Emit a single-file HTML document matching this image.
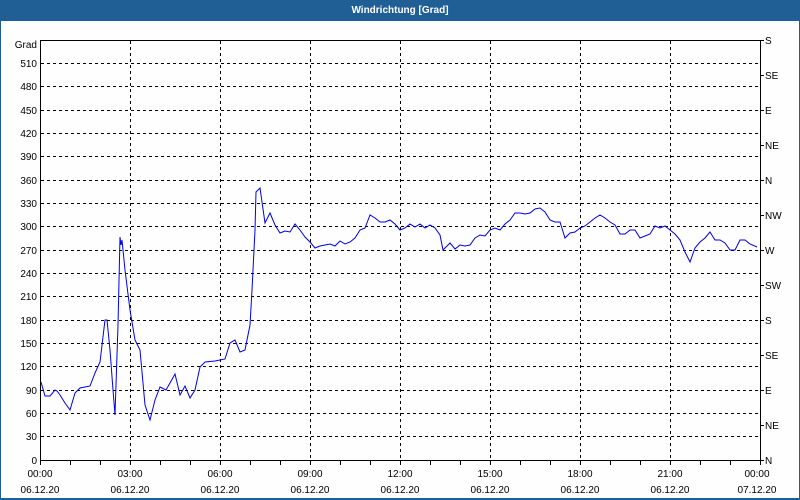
<!DOCTYPE html>
<html><head><meta charset="utf-8"><style>
html,body{margin:0;padding:0;background:#fff;width:800px;height:500px;overflow:hidden}
svg{display:block}
text{font-family:"Liberation Sans",sans-serif;font-size:10px;fill:#000}
</style></head><body>
<svg width="800" height="500" viewBox="0 0 800 500" xmlns="http://www.w3.org/2000/svg">
<rect x="0" y="0" width="800" height="500" fill="#1f5f96"/>
<rect x="1" y="21" width="798" height="477" fill="#fdfefd"/>
<text x="400" y="13" text-anchor="middle" style="fill:#fff;font-weight:bold;font-size:10px">Windrichtung [Grad]</text>
<g stroke="#000" stroke-width="1" stroke-dasharray="3,3" fill="none">
<path d="M41 63.5H760M41 86.5H760M41 110.5H760M41 133.5H760M41 156.5H760M41 180.5H760M41 203.5H760M41 226.5H760M41 250.5H760M41 273.5H760M41 296.5H760M41 320.5H760M41 343.5H760M41 366.5H760M41 390.5H760M41 413.5H760M41 436.5H760"/>
<path d="M130.5 41V460M220.5 41V460M310.5 41V460M400.5 41V460M490.5 41V460M580.5 41V460M670.5 41V460"/>
</g>
<g stroke="#000" stroke-width="1" fill="none">
<path d="M40.5 40V461M760.5 40V461M40 40.5H761M40 460.5H761"/>
<path d="M70.5 460v5M100.5 460v5M130.5 460v5M160.5 460v5M190.5 460v5M220.5 460v5M250.5 460v5M280.5 460v5M310.5 460v5M340.5 460v5M370.5 460v5M400.5 460v5M430.5 460v5M460.5 460v5M490.5 460v5M520.5 460v5M550.5 460v5M580.5 460v5M610.5 460v5M640.5 460v5M670.5 460v5M700.5 460v5M730.5 460v5M760.5 460v5M40.5 460v5"/>
<path d="M760 40.5h4M760 75.5h4M760 110.5h4M760 145.5h4M760 180.5h4M760 215.5h4M760 250.5h4M760 285.5h4M760 320.5h4M760 355.5h4M760 390.5h4M760 425.5h4M760 460.5h4"/>
</g>
<g text-anchor="end">
<text x="37" y="48">Grad</text>
<text x="37" y="67">510</text><text x="37" y="90">480</text><text x="37" y="114">450</text><text x="37" y="137">420</text><text x="37" y="160">390</text><text x="37" y="184">360</text><text x="37" y="207">330</text><text x="37" y="230">300</text><text x="37" y="254">270</text><text x="37" y="277">240</text><text x="37" y="300">210</text><text x="37" y="324">180</text><text x="37" y="347">150</text><text x="37" y="370">120</text><text x="37" y="394">90</text><text x="37" y="417">60</text><text x="37" y="440">30</text><text x="37" y="464">0</text>
</g>
<g>
<text x="765" y="44">S</text><text x="765" y="79">SE</text><text x="765" y="114">E</text><text x="765" y="149">NE</text><text x="765" y="184">N</text><text x="765" y="219">NW</text><text x="765" y="254">W</text><text x="765" y="289">SW</text><text x="765" y="324">S</text><text x="765" y="359">SE</text><text x="765" y="394">E</text><text x="765" y="429">NE</text><text x="765" y="464">N</text>
</g>
<g text-anchor="middle">
<text x="40" y="477">00:00</text><text x="40" y="493">06.12.20</text>
<text x="130" y="477">03:00</text><text x="130" y="493">06.12.20</text>
<text x="220" y="477">06:00</text><text x="220" y="493">06.12.20</text>
<text x="310" y="477">09:00</text><text x="310" y="493">06.12.20</text>
<text x="400" y="477">12:00</text><text x="400" y="493">06.12.20</text>
<text x="490" y="477">15:00</text><text x="490" y="493">06.12.20</text>
<text x="580" y="477">18:00</text><text x="580" y="493">06.12.20</text>
<text x="670" y="477">21:00</text><text x="670" y="493">06.12.20</text>
<text x="757" y="477">00:00</text><text x="757" y="493">07.12.20</text>
</g>
<polyline fill="none" stroke="#0000ee" stroke-width="1" points="41,382 45,396 50,396 55,390 57,391 60,395 65,403 70,410 75,393 80,388 85,387 90,386 95,373 100,362 105,320 107,320 110,350 113,390 115,415 118,325 120,237 121,245 122,240 125,270 130,310 135,340 140,350 145,405 150,420 155,400 160,387 166,390 170,383 175,374 180,395 185,386 190,398 195,390 200,367 205,362 215,361 225,359 230,343 235,340 240,352 245,350 250,325 252,290 255,230 256,192 260,188 265,223 270,213 275,225 280,233 285,231 290,232 295,224 300,230 305,237 310,242 315,248 320,246 325,245 330,244 335,246 340,241 345,244 350,242 355,238 360,230 365,228 370,215 375,218 380,222 385,222 390,220 395,224 400,230 405,228 410,224 415,227 420,224 425,228 430,225 435,228 440,235 443,250 446,247 450,243 455,249 460,245 465,246 470,245 475,238 480,235 485,236 490,230 495,228 500,230 505,224 510,220 515,213 520,213 525,214 530,213 535,209 540,208 545,212 550,220 555,222 560,222 565,238 570,233 575,232 580,228 585,226 590,222 595,218 600,215 605,218 610,222 615,225 620,234 625,234 630,230 635,230 640,238 645,236 650,234 655,226 660,228 665,226 670,230 675,234 680,240 685,252 690,262 695,248 700,242 705,238 710,232 715,240 720,240 725,243 730,250 735,250 740,240 745,240 750,244 757,247"/>
</svg>
</body></html>
